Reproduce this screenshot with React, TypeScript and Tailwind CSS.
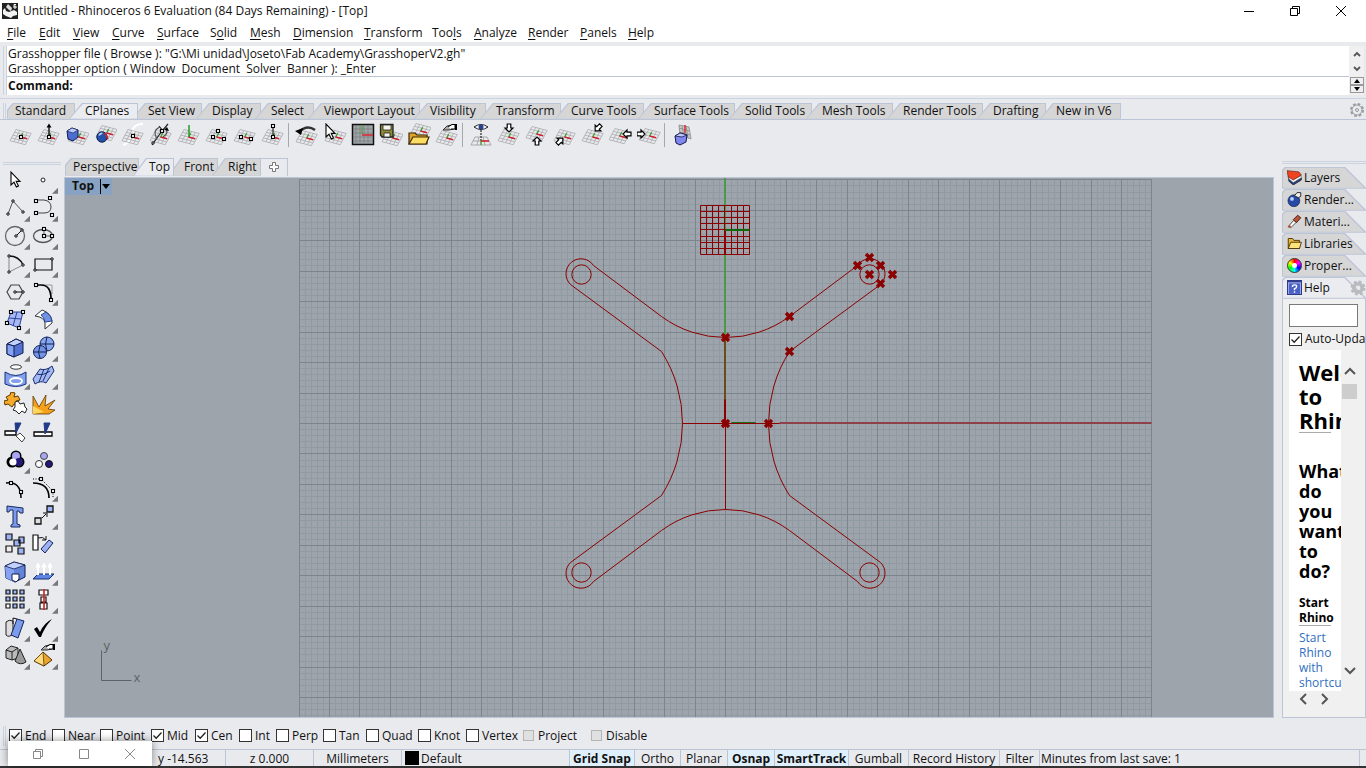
import React, { useState } from 'react';
import clsx from 'clsx';

type Slot = { label: string; width: string };

const MENUS: (Slot & { key: number })[] = [
    { label: 'File', width: 'w-8', key: 0 },
    { label: 'Edit', width: 'w-[34px]', key: 0 },
    { label: 'View', width: 'w-[39px]', key: 0 },
    { label: 'Curve', width: 'w-[45px]', key: 0 },
    { label: 'Surface', width: 'w-[53px]', key: 0 },
    { label: 'Solid', width: 'w-10', key: 1 },
    { label: 'Mesh', width: 'w-[43px]', key: 0 },
    { label: 'Dimension', width: 'w-[71px]', key: 0 },
    { label: 'Transform', width: 'w-[68px]', key: 0 },
    { label: 'Tools', width: 'w-[42px]', key: 3 },
    { label: 'Analyze', width: 'w-[54px]', key: 0 },
    { label: 'Render', width: 'w-[52px]', key: 0 },
    { label: 'Panels', width: 'w-12', key: 0 },
    { label: 'Help', width: 'w-10', key: 0 },
];

const TOOL_TABS: Slot[] = [
    { label: 'Standard', width: 'w-[68px]' },
    { label: 'CPlanes', width: 'w-[69px]' },
    { label: 'Set View', width: 'w-[70px]' },
    { label: 'Display', width: 'w-[65px]' },
    { label: 'Select', width: 'w-[59px]' },
    { label: 'Viewport Layout', width: 'w-[112px]' },
    { label: 'Visibility', width: 'w-[72px]' },
    { label: 'Transform', width: 'w-[81px]' },
    { label: 'Curve Tools', width: 'w-[89px]' },
    { label: 'Surface Tools', width: 'w-[97px]' },
    { label: 'Solid Tools', width: 'w-[83px]' },
    { label: 'Mesh Tools', width: 'w-[87px]' },
    { label: 'Render Tools', width: 'w-24' },
    { label: 'Drafting', width: 'w-[69px]' },
    { label: 'New in V6', width: 'w-[81px]' },
];

const VIEW_TABS: Slot[] = [
    { label: 'Perspective', width: 'w-[74px]' },
    { label: 'Top', width: 'w-[41px]' },
    { label: 'Front', width: 'w-[50px]' },
    { label: 'Right', width: 'w-[49px]' },
];

const OSNAPS: (Slot & { on?: boolean; disabled?: boolean })[] = [
    { label: 'End', width: 'w-[43px]', on: true },
    { label: 'Near', width: 'w-12' },
    { label: 'Point', width: 'w-[51px]' },
    { label: 'Mid', width: 'w-11', on: true },
    { label: 'Cen', width: 'w-11', on: true },
    { label: 'Int', width: 'w-[37px]' },
    { label: 'Perp', width: 'w-[47px]' },
    { label: 'Tan', width: 'w-[43px]' },
    { label: 'Quad', width: 'w-[52px]' },
    { label: 'Knot', width: 'w-12' },
    { label: 'Vertex', width: 'w-14' },
    { label: 'Project', width: 'w-[68px]', disabled: true },
    { label: 'Disable', width: 'w-16', disabled: true },
];

const MODES: (Slot & { on?: boolean })[] = [
    { label: 'Grid Snap', width: 'w-[65px]', on: true },
    { label: 'Ortho', width: 'w-[46px]' },
    { label: 'Planar', width: 'w-[47px]' },
    { label: 'Osnap', width: 'w-[47px]', on: true },
    { label: 'SmartTrack', width: 'w-[74px]', on: true },
    { label: 'Gumball', width: 'w-[60px]' },
    { label: 'Record History', width: 'w-[91px]' },
    { label: 'Filter', width: 'w-10' },
];

/* ---------- icon helpers, every icon lives on a 24x24 board ---------- */

const Icon: React.FC<{ children: React.ReactNode }> = ({ children }) => (
    <svg viewBox="0 0 24 24" className="h-6 w-6" fill="none" stroke="#111" strokeWidth="1" aria-hidden="true">{children}</svg>
);

const Knob: React.FC<{ x: number; y: number }> = ({ x, y }) => (
    <rect x={x - 1.5} y={y - 1.5} width="3" height="3" fill="#fff" stroke="#000" strokeWidth="1.1" />
);

const Dot: React.FC<{ x: number; y: number }> = ({ x, y }) => (
    <circle cx={x} cy={y} r="1.2" fill="#fff" stroke="#000" />
);

const Plane: React.FC<{ x?: number; y?: number }> = ({ x = 0, y = 0 }) => {
    const at = (u: number, v: number) => `${7 + 3.8 * u - 1.5 * v} ${6.5 + 1 * u + 2.8 * v}`;
    const lines = [0, 1, 2, 3, 4].map(i => `M${at(0, i)}L${at(4, i)}M${at(i, 0)}L${at(i, 4)}`).join('');
    return (
        <g transform={`translate(${x} ${y})`}>
            <path d={lines} stroke="#a9aaad" strokeWidth="0.8" />
            <path d={`M${at(2, 2)}L${at(2, 0.6)}`} stroke="#3fa535" strokeWidth="1.3" />
            <path d={`M${at(2, 2)}L${at(3.7, 2)}`} stroke="#cf1f2a" strokeWidth="1.6" />
        </g>
    );
};

const Arrow: React.FC<{ x: number; y: number; turn: number }> = ({ x, y, turn }) => (
    <path transform={`translate(${x} ${y}) rotate(${turn})`} d="M-4 -1.8H0V-4L4 0L0 4V1.8H-4Z" fill="#fff" stroke="#000" strokeWidth="1.2" />
);

const Hand = () => (
    <g strokeWidth="1">
        <path d="M8 7L12 3L19 1.5V6L14 7Z" fill="#aaa" stroke="#333" />
        <path d="M13 4L17 1.5H20V6H16" fill="#fff" stroke="#000" />
        <path d="M21 1V7" stroke="#000" strokeWidth="2" />
    </g>
);

const Pointer = () => (
    <path d="M3 1V14L6 11.2L8.4 16L10.5 15L8.2 10.4H12Z" fill="#fff" stroke="#000" strokeWidth="1.1" />
);

const PLANE_TOOLS: { name: string; art: React.ReactNode }[][] = [
    [
        { name: 'Set CPlane origin', art: <><Plane /><Knob x={12} y={14} /></> },
        { name: 'Set CPlane elevation', art: <><Plane /><path d="M12 13V3" stroke="#000" strokeWidth="1.3" /><path d="M9.5 4.5L12 0.5L14.5 4.5Z" fill="#000" stroke="none" /><Knob x={12} y={14} /></> },
        { name: 'Set CPlane to object', art: <><Plane x={2} /><path d="M2 8L7 5L13 7L13 14L8 18L3 16Z" fill="#4c6cd0" stroke="#111a55" /><path d="M2 8L7 5L13 7L8 10Z" fill="#b9cbf7" stroke="#111a55" strokeWidth="0.6" /></> },
        { name: 'Set CPlane to surface', art: <><Plane x={2} y={-4} /><circle cx="9" cy="14" r="5.2" fill="#2450a8" stroke="#10204f" /><path d="M6 12.5Q7 10 9.5 10.5" stroke="#b9cdfa" strokeWidth="1.6" /><path d="M12 10L15 16" stroke="#d22" strokeWidth="1.5" /></> },
        { name: 'Set CPlane perpendicular to curve', art: <><path d="M2 22C10 19 14 12 12 6C14 2 18 1 22 1" stroke="#fff" strokeWidth="2" /><Plane /><Knob x={12} y={13} /></> },
        { name: 'Rotate CPlane', art: <><Plane /><path d="M3 22L13 8L19 1M10 3L14 8" stroke="#222" strokeWidth="1.2" /><path d="M8 16Q3 7 11 4M17 5Q20 10 14 14" stroke="#555" strokeWidth="1.2" /><path d="M15 7L18 4L20 8Z" fill="#000" stroke="none" /><Dot x={4} y={20} /><Knob x={13} y={8} /></> },
        { name: 'Set CPlane vertical', art: <><Plane /><path d="M12 14V2" stroke="#1f9c24" strokeWidth="1.5" /></> },
        { name: 'Set CPlane by 3 points', art: <><Plane /><Knob x={13} y={8} /><Knob x={8} y={14} /><Knob x={19} y={16} /></> },
        { name: 'Set CPlane X axis', art: <><Plane /><Knob x={8} y={14} /><Knob x={18} y={16} /></> },
        { name: 'Set CPlane Z axis', art: <><Plane /><path d="M12 14V3" stroke="#000" /><Knob x={12} y={3} /><Knob x={12} y={14} /></> },
    ],
    [
        { name: 'Previous CPlane', art: <><Plane y={1} /><path d="M4 9Q12 1 20 7" stroke="#333" strokeWidth="2.5" /><path d="M0 8L8 5L6 12Z" fill="#000" stroke="none" /></> },
        { name: 'Select CPlane', art: <><Plane x={1} /><Pointer /></> },
        { name: 'Named CPlanes', art: <><rect x="1.5" y="1.5" width="21" height="20" fill="#a0a5a8" stroke="#111" strokeWidth="1.5" /><path d="M5 2V21M9 2V21M13 2V21M17 2V21M2 6H22M2 10H22M2 14H22M2 18H22" stroke="#777b7e" strokeWidth="0.7" /><path d="M11 2V11" stroke="#3fa535" /><path d="M11 12H22" stroke="#dc2430" strokeWidth="1.5" /></> },
        { name: 'Save CPlane', art: <><Plane x={2} y={1} /><path d="M1.5 1.5H14V14H3L1.5 12Z" fill="#8d8a35" stroke="#222" strokeWidth="1.3" /><path d="M4 2H12V7H4ZM5 10H11V14H5Z" fill="#f4f4ec" stroke="#222" strokeWidth="0.8" /></> },
        { name: 'Open CPlanes', art: <><Plane x={2} y={-6} /><path d="M2 21V10H8L10 12H20V21Z" fill="#dfa32a" stroke="#3c2a05" strokeWidth="1.2" /><path d="M2 21L6 14H22L19 21Z" fill="#fddc63" stroke="#3c2a05" strokeWidth="1.2" /></> },
        { name: 'CPlane properties', art: <><Plane y={1} /><Hand /></> },
    ],
    [
        { name: 'World top plan', art: <><path d="M6 14H18L22 22H2ZM10 14L8 22M14 14L16 22M4 18H20" stroke="#999" strokeWidth="0.8" /><path d="M12 7V18" stroke="#000" strokeDasharray="2 1" /><path d="M5 4Q12 -1 19 4Q12 9 5 4Z" fill="#fff" stroke="#222" /><circle cx="12" cy="4" r="2.5" fill="#28428f" stroke="none" /><path d="M12 22V17" stroke="#3fa535" strokeWidth="1.5" /><path d="M12 18H20" stroke="#cf1f2a" strokeWidth="1.5" /></> },
        { name: 'World top CPlane', art: <><Plane /><Arrow x={12} y={5} turn={90} /></> },
        { name: 'World bottom CPlane', art: <><Plane y={-3} /><Arrow x={12} y={18} turn={-90} /></> },
        { name: 'World left CPlane', art: <><Plane /><Arrow x={7} y={18} turn={-45} /></> },
        { name: 'World right CPlane', art: <><Plane /><Arrow x={17} y={5} turn={135} /></> },
        { name: 'World front CPlane', art: <><Plane x={-1} y={-1} /><Arrow x={18} y={11} turn={180} /></> },
        { name: 'World back CPlane', art: <><Plane x={1} y={-1} /><Arrow x={4} y={11} turn={0} /></> },
    ],
    [
        { name: 'CPlane to view', art: <><path d="M8 2L18 4L20 16L9 12ZM11 3L13 14M15 3L17 15M8 5L18 8M9 9L19 12" fill="#ccc" stroke="#888" strokeWidth="0.8" /><path d="M14 2V10" stroke="#d22" strokeWidth="1.4" /><path d="M4 13L9 10L16 12L15 19L9 22L5 20Z" fill="#7f88ee" stroke="#15174f" /><path d="M4 13L11 14L16 12L9 10Z" fill="#c3c8fa" stroke="#15174f" strokeWidth="0.8" /></> },
    ],
];

const BLUE = '#9db2f3';

const SIDE_TOOLS: { name: string; more?: boolean; art: React.ReactNode }[] = [
    { name: 'Select', art: <g transform="translate(4 3)"><Pointer /></g> },
    { name: 'Point', more: true, art: <circle cx="11" cy="12" r="2" fill="#fff" stroke="#222" /> },
    { name: 'Polyline', more: true, art: <><path d="M4 18L9 5L19 16" stroke="#555" /><Dot x={4} y={18} /><Dot x={9} y={5} /><Dot x={19} y={16} /></> },
    { name: 'Control point curve', more: true, art: <><path d="M4 4H12Q19 5 19 11Q19 17 12 17H4" stroke="#444" /><Knob x={4} y={5} /><Knob x={4} y={17} /><Knob x={18} y={2} /><Knob x={20} y={19} /></> },
    { name: 'Circle', more: true, art: <><circle cx="11" cy="12" r="9.5" stroke="#666" strokeWidth="1.3" /><path d="M12 12L18 6" /><Dot x={12} y={12} /><Dot x={18} y={6} /></> },
    { name: 'Ellipse', more: true, art: <><ellipse cx="11" cy="12" rx="9.5" ry="6.5" stroke="#555" strokeWidth="1.3" /><path d="M12 6V12H20" stroke="#555" /><Knob x={12} y={5} /><Knob x={12} y={12} /><Knob x={20} y={12} /></> },
    { name: 'Arc', more: true, art: <><path d="M5 20L19 13" stroke="#888" /><path d="M5 20V4" stroke="#888" /><path d="M5 4Q15 4 19 13" strokeWidth="1.5" /><Dot x={5} y={4} /><Dot x={5} y={20} /><Dot x={19} y={13} /></> },
    { name: 'Rectangle', more: true, art: <><path d="M3 7H20V18H3Z" strokeWidth="1.2" /><Dot x={20} y={7} /><Dot x={3} y={18} /></> },
    { name: 'Polygon', more: true, art: <><path d="M3 12L7 5H15L19 12L15 19H7Z" stroke="#444" strokeWidth="1.2" /><path d="M11 12H19" /><Dot x={11} y={12} /><Dot x={19} y={12} /></> },
    { name: 'Fillet curves', more: true, art: <><path d="M10 5H20V14" stroke="#999" /><path d="M4 5H9Q19 5 19 19" stroke="#000" strokeWidth="1.7" /><Knob x={4} y={5} /><Knob x={19} y={20} /></> },
    { name: 'Surface from corner points', more: true, art: <><path d="M7 4H19L15 20L3 15Z" fill="#a9b8f2" stroke="#29459e" /><path d="M13 4L9 18M5 10L17 11" stroke="#29459e" /><Knob x={7} y={4} /><Knob x={19} y={4} /><Knob x={3} y={15} /><Knob x={15} y={20} /></> },
    { name: 'Sweep surface', more: true, art: <><path d="M3 8L10 2Q19 5 20 13V15L13 21V15Q12 9 3 8Z" fill="#fff" stroke="#333" /><path d="M9 7L14 4Q20 8 20 13L13 14Q12 9 9 7Z" fill="#6f93e2" stroke="#26458e" /></> },
    { name: 'Box', more: true, art: <><path d="M3 8L12 3L19 6V17L10 21L3 18Z" fill="#5371cf" stroke="#101d56" /><path d="M3 8L10 10L19 6L12 3Z" fill="#c2d1fb" stroke="#101d56" /><path d="M3 8L10 10V21L3 18Z" fill="#86a3f2" stroke="#101d56" /></> },
    { name: 'Sphere union', more: true, art: <><circle cx="15" cy="8" r="7" fill="#86a6ee" stroke="#111f55" /><path d="M8 8H22M15 1Q12 8 15 15" stroke="#111f55" /><circle cx="8" cy="16" r="6.5" fill="#7495e6" stroke="#111f55" /><path d="M2 16H14M8 10Q5 16 8 22" stroke="#111f55" /></> },
    { name: 'Project curve', more: true, art: <><ellipse cx="12" cy="3" rx="5.5" ry="2.2" fill="#fff" stroke="#333" /><path d="M1 8Q12 15 22 8V20Q12 25 1 20Z" fill="#83a0ea" stroke="#14317b" /><ellipse cx="12" cy="17" rx="6" ry="3" stroke="#fff" strokeWidth="1.8" /></> },
    { name: 'Mesh plane', more: true, art: <><path d="M8 5Q14 7 20 2L22 7L14 19Q9 16 3 20L1 15Z" fill="#a5b9f1" stroke="#172e74" /><path d="M5 10Q11 12 18 7M12 5L7 18M17 4L11 17" stroke="#172e74" /></> },
    { name: 'Explode blocks', art: <><path d="M2 5L6 3L7 0L11 1L10 5L14 4L16 8L12 9L14 13L10 12L8 15L4 12L1 13L0 9L4 8Z" fill="#f5aa2a" stroke="#5e3b00" /><path d="M11 10L14 9L16 12L20 11L21 15L23 17L21 21L18 19L15 22L12 19L9 18L11 15Z" fill="#fff" stroke="#222" /></> },
    { name: 'Explode', art: <><path d="M1 22V4L7 15L14 3L13 14L23 8L16 17L23 18L17 22Z" fill="#f6a11c" stroke="#5e3b00" strokeWidth="0.8" /><path d="M1 22V14L12 20Z" fill="#ffd65a" stroke="none" /></> },
    { name: 'Trim', art: <><path d="M1 11H12V15H1Z" fill="#fff" stroke="#000" strokeWidth="1.3" /><path d="M11 3H17L12 13Z" fill="#213b88" stroke="#213b88" /><path d="M12 16L16 13L21 18L18 22Z" fill="#fff" stroke="#444" /></> },
    { name: 'Split', art: <><path d="M2 12H20V16H2Z" fill="#fff" stroke="#000" strokeWidth="1.3" /><path d="M12 3H18L13 14Z" fill="#213b88" stroke="#213b88" /></> },
    { name: 'Group', more: true, art: <><g stroke="#000" strokeWidth="3"><circle cx="12" cy="8" r="4" /><circle cx="8" cy="14" r="4" /><circle cx="15" cy="14" r="4" /></g><circle cx="12" cy="8" r="4" fill="#a8a6f0" stroke="none" /><circle cx="15" cy="14" r="4" fill="#211878" stroke="none" /><circle cx="9" cy="14" r="3.5" fill="#fff" stroke="none" /></> },
    { name: 'Ungroup', art: <><circle cx="12" cy="8" r="3.5" fill="#a8a6f0" stroke="#444" /><circle cx="7" cy="16" r="3.5" fill="#fff" stroke="#333" /><circle cx="17" cy="16" r="3.5" fill="#211878" stroke="#111" /></> },
    { name: 'Edit points on', art: <><path d="M2 7Q17 5 17 22" stroke="#000" strokeWidth="1.5" /><Knob x={7} y={7} /><Knob x={17} y={16} /></> },
    { name: 'Points off', more: true, art: <><path d="M1 3H9L21 15V22" stroke="#000" strokeDasharray="1 1.5" /><path d="M1 7Q17 7 17 22" stroke="#000" strokeWidth="1.7" /><Knob x={9} y={3} /><Knob x={21} y={15} /></> },
    { name: 'Text object', art: <path d="M3 2L19 4V9H16L15 7L13 7V20L16 21V23H7V21L9 20V6H6L5 8H3Z" fill="#7b9cec" stroke="#17285f" /> },
    { name: 'Move', more: true, art: <><path d="M15 2H21V8H15Z" fill={BLUE} strokeWidth="1.3" /><path d="M3 14H9V20H3Z" fill="#ddd" strokeWidth="1.3" /><path d="M10 14L14 10M11 9H15V13" /></> },
    { name: 'Copy', art: <g strokeWidth="1.2"><path d="M2 2H8V8H2ZM15 5H20V11H15ZM10 8H16V14H10ZM14 16H20V22H14Z" fill={BLUE} /><path d="M2 14H8V20H2Z" fill="#eee" /></g> },
    { name: 'Orient', art: <><path d="M1 3H6V18H1Z" fill="#fff" strokeWidth="1.2" /><path d="M9 17L17 8L21 11L13 21Z" fill={BLUE} stroke="#14245c" /><path d="M6 6Q11 4 14 8M14 4V8H10" /></> },
    { name: 'Boolean', more: true, art: <><path d="M1 6L10 2L21 5V17L11 22L2 18Z" fill="#6283d6" stroke="#101d56" /><path d="M1 6L10 9V22L2 18Z" fill="#86a3f2" stroke="none" /><path d="M1 6L10 9L21 5L10 2Z" fill="#c2d1fb" stroke="#101d56" strokeWidth="0.8" /><path d="M8 14H15V19L12 22L8 20Z" fill="#fff" stroke="#101d56" /></> },
    { name: 'Extrude surface', more: true, art: <><path d="M6 14H22L17 19H1Z" fill="#6086e5" stroke="#122d70" /><path d="M6 15V5M12 15V5M18 15V5" stroke="#fff" strokeWidth="2" /><path d="M4 7L6 3L8 7ZM10 7L12 3L14 7ZM16 7L18 3L20 7Z" fill="#fff" stroke="#fff" /></> },
    { name: 'Array', more: true, art: <g strokeWidth="1.2"><path d="M2 2H6V6H2ZM9 2H13V6H9ZM16 2H20V6H16ZM2 9H6V13H2ZM9 9H13V13H9ZM16 9H20V13H16ZM9 16H13V20H9ZM16 16H20V20H16Z" fill={BLUE} /><path d="M2 16H6V20H2Z" fill="#fff" /></g> },
    { name: 'Align', more: true, art: <><path d="M7 2H16V7H7ZM9 9H14V14H9ZM8 15H15V21H8Z" fill="#fff" strokeWidth="1.2" /><path d="M12 1V22" stroke="#d22" strokeWidth="1.7" /></> },
    { name: 'Bend', more: true, art: <><path d="M2 6Q5 3 9 5V18Q5 22 2 19Z" fill="#ddd" stroke="#222" /><path d="M13 3L20 5L14 22L7 19Z" fill="#7b9cec" stroke="#14245c" /><path d="M13 3L9 2L9 8" /></> },
    { name: 'Check', more: true, art: <path d="M2 13L5 11L8 16Q12 7 20 3Q12 12 9 21H7Z" fill="#000" stroke="none" /> },
    { name: 'Solid creation', more: true, art: <><path d="M2 6L7 2L14 4V14L8 16L2 14Z" fill="#bbb" stroke="#222" /><path d="M2 6L8 8L14 4M8 8V16" stroke="#222" /><path d="M16 5L22 18Q16 22 11 17Z" fill="#999" stroke="#222" /></> },
    { name: 'Render tools', more: true, art: <><path d="M2 17L11 8L20 16L12 22Z" fill="#e9a52e" stroke="#4d2f00" /><path d="M11 8L12 22L2 17Z" fill="#ffdb7d" stroke="#4d2f00" strokeWidth="0.7" /><g transform="translate(1 -1)"><Hand /></g></> },
];

const PANELS: { label: string; art: React.ReactNode }[] = [
    { label: 'Layers', art: <><path d="M2 10L10 18L23 12V16L10 24L3 18Z" fill="#263f7c" stroke="#111" /><path d="M2 7L10 15L23 9V12L10 20L3 14Z" fill="#fff" stroke="#777" /><path d="M0 1L19 3L23 8L10 16L2 11Z" fill="#ee4421" stroke="#5d160a" /></> },
    { label: 'Render...', art: <><circle cx="11" cy="14" r="9.5" fill="#274ba5" stroke="#101d4a" /><circle cx="8" cy="11" r="3" fill="#bfd2ff" stroke="none" /><path d="M12 6L16 1H22V7L18 9Z" fill="#eee" stroke="#222" strokeWidth="1.5" /></> },
    { label: 'Materi...', art: <><path d="M2 20L11 10L15 13L6 22Z" fill="#fff" stroke="#444" strokeWidth="1.5" /><path d="M10 9L17 2L22 6L15 14Z" fill="#b5583a" stroke="#4c1c0f" strokeWidth="1.5" /><path d="M1 22L4 17L7 20Z" fill="#c42" stroke="none" /></> },
    { label: 'Libraries', art: <><path d="M2 20V4H9L11 7H20V20Z" fill="#e9b93e" stroke="#4c3606" strokeWidth="1.5" /><path d="M2 20L6 10H23L20 20Z" fill="#ffe279" stroke="#4c3606" strokeWidth="1.5" /></> },
];

const CheckBox: React.FC<{ label: string; on?: boolean; disabled?: boolean; className?: string }> = ({ label, on = false, disabled, className }) => (
    <label className={clsx('flex shrink-0 items-center gap-[3px] whitespace-nowrap', className)}>
        <span className="grid">
            <input
                type="checkbox"
                defaultChecked={on}
                disabled={disabled}
                className="peer col-start-1 row-start-1 h-[13px] w-[13px] appearance-none border border-[#333] bg-white disabled:m-px disabled:h-[11px] disabled:w-[11px] disabled:border-[#b5b5b5] disabled:bg-[#dfe0e0]"
            />
            <svg viewBox="0 0 13 13" className="pointer-events-none invisible col-start-1 row-start-1 h-[13px] w-[13px] peer-checked:visible" fill="none" stroke="#222" strokeWidth="1.3">
                <path d="M2.5 6.5L5.2 9.2L10.5 3.5" />
            </svg>
        </span>
        {label}
    </label>
);

const TabStrip: React.FC<{ tabs: Slot[]; initial: string; tall?: boolean }> = ({ tabs, initial, tall }) => {
    const [active, setActive] = useState(initial);
    return (
        <div role="tablist" className="flex shrink-0 items-end">
            {tabs.map((tab, i) => (
                <button
                    key={tab.label}
                    role="tab"
                    aria-selected={active === tab.label}
                    onClick={() => setActive(tab.label)}
                    className={clsx(
                        'relative shrink-0 bg-[#bcc5d6] pt-px pr-px pl-px whitespace-nowrap',
                        tab.width,
                        tall ? 'h-[18px]' : 'h-4',
                        i > 0 && '-ml-[6px]',
                        i === 0 ? '[clip-path:polygon(0_100%,0_7px,6px_0,100%_0,100%_100%)]' : '[clip-path:polygon(0_100%,13px_0,100%_0,100%_100%)]',
                        active === tab.label && 'z-10'
                    )}
                >
                    <span
                        className={clsx(
                            'flex h-full items-center',
                            i === 0 ? 'pl-[7px] [clip-path:polygon(0_100%,0_7px,6px_0,100%_0,100%_100%)]' : 'pl-[15px] [clip-path:polygon(0_100%,13px_0,100%_0,100%_100%)]',
                            active === tab.label ? 'bg-[#ebecf0]' : 'bg-[#d6d6d7]'
                        )}
                    >
                        {tab.label}
                    </span>
                </button>
            ))}
        </div>
    );
};

const TitleBar = () => (
    <header className="flex h-[22px] items-center bg-white pr-[2px] pl-[2px]">
        <svg viewBox="0 0 16 16" className="h-4 w-4" aria-hidden="true">
            <rect width="16" height="16" fill="#222" />
            <path d="M1 7L3 5L4 8L7 9L12 7L15 9V12L11 13L9 15L4 13L1 11Z" fill="#f4f4f4" />
            <path d="M6 1L10 5L9 8L7 7L4 4Z" fill="#ddd" />
            <path d="M14 1.5H12V5H14V3.2H12" fill="none" stroke="#fff" />
        </svg>
        <h1 className="ml-[5px]">Untitled - Rhinoceros 6 Evaluation (84 Days Remaining) - [Top]</h1>
        <div className="ml-auto flex">
            <button aria-label="Minimize" className="grid h-5 w-[46px] place-items-center"><svg viewBox="0 0 12 12" className="h-3 w-3"><path d="M1 6.5H11" stroke="#000" /></svg></button>
            <button aria-label="Restore" className="grid h-5 w-[46px] place-items-center"><svg viewBox="0 0 12 12" className="h-3 w-3" fill="none" stroke="#000"><path d="M1.5 3.5H8.5V10.5H1.5ZM3.5 3.5V1.5H10.5V8.5H8.5" /></svg></button>
            <button aria-label="Close" className="grid h-5 w-[46px] place-items-center"><svg viewBox="0 0 12 12" className="h-3 w-3"><path d="M1 1L11 11M11 1L1 11" stroke="#000" /></svg></button>
        </div>
    </header>
);

const MenuBar = () => (
    <nav className="flex h-5 items-end bg-white pl-[7px]">
        {MENUS.map(m => (
            <button key={m.label} className={clsx('shrink-0 text-left leading-[18px]', m.width)}>
                {m.label.slice(0, m.key)}<u className="underline-offset-2">{m.label[m.key]}</u>{m.label.slice(m.key + 1)}
            </button>
        ))}
    </nav>
);

const CommandArea = () => (
    <section className="flex border-b border-[#ccd3e0] pt-1 pr-[2px] pb-[3px] pl-[3px]">
        <div className="w-1 border-x border-[#ccd3e0]"></div>
        <div className="min-w-0 grow bg-white">
            <div className="h-[31px] border-b border-[#bcc5d6] pl-px leading-[15px]">
                <p>Grasshopper file ( Browse ): "G:\Mi unidad\Joseto\Fab Academy\GrasshoperV2.gh"</p>
                <p className="whitespace-pre">Grasshopper option ( Window  Document  Solver  Banner ): _Enter</p>
            </div>
            <label className="flex h-[18px] items-center pl-px">
                <b className="font-bold">Command:</b>
                <input className="min-w-0 grow pl-1 outline-none" />
            </label>
        </div>
        <div className="flex w-[15px] flex-col items-center bg-[#f0f0f0]">
            <button aria-label="Scroll up" className="grid h-4 place-items-center"><svg viewBox="0 0 8 6" className="h-[6px] w-2" fill="none" stroke="#555" strokeWidth="1.8"><path d="M1 5L4 2L7 5" /></svg></button>
            <button aria-label="Scroll down" className="grid h-[15px] place-items-center"><svg viewBox="0 0 8 6" className="h-[6px] w-2" fill="none" stroke="#555" strokeWidth="1.8"><path d="M1 1L4 4L7 1" /></svg></button>
            <button aria-label="Previous command" className="grid h-2 w-[14px] place-items-center border border-[#999]"><svg viewBox="0 0 6 4" className="h-1 w-[6px]"><path d="M0 4L3 0L6 4Z" /></svg></button>
            <button aria-label="Next command" className="grid h-2 w-[14px] place-items-center border border-[#999]"><svg viewBox="0 0 6 4" className="h-1 w-[6px]"><path d="M0 0L3 4L6 0Z" /></svg></button>
        </div>
    </section>
);

const Gear: React.FC<{ filled?: boolean }> = ({ filled }) => (
    <svg viewBox="0 0 16 16" className="h-4 w-4" fill="none" aria-hidden="true">
        <circle cx="8" cy="8" r="6" stroke={filled ? '#b9bbbf' : '#999ca2'} strokeWidth={filled ? 3 : 2} strokeDasharray="2.7 2" />
        <circle cx="8" cy="8" r={filled ? 4.2 : 5} stroke={filled ? '#b9bbbf' : '#999ca2'} strokeWidth={filled ? 3.5 : 1} />
        <circle cx="8" cy="8" r="1.5" stroke={filled ? 'none' : '#999ca2'} />
    </svg>
);

const Toolbars = () => (
    <section className="flex flex-col">
        <div className="flex h-[21px] items-end border-b border-[#bcc5d6] pt-1 pl-[3px]">
            <div className="mr-px h-full w-[3px] shrink-0 border-x border-[#ccd3e0]"></div>
            <TabStrip tabs={TOOL_TABS} initial="CPlanes" />
            <button aria-label="Toolbar options" className="mr-[1px] mb-px ml-auto"><Gear /></button>
        </div>
        <div className="flex h-[33px] items-center pb-[3px] pl-[7px]">
            {PLANE_TOOLS.map((group, g) => (
                <div key={g} className="flex items-center">
                    {g > 0 && <div className="ml-px h-6 w-[5px] border-l border-[#a5a8ae]"></div>}
                    {group.map(tool => (
                        <button key={tool.name} title={tool.name} className="grid h-7 w-7 place-items-center"><Icon>{tool.art}</Icon></button>
                    ))}
                </div>
            ))}
        </div>
    </section>
);

const SideTools = () => (
    <aside className="w-16 shrink-0">
        <div className="mx-[3px] mt-[9px] h-[3px] border-y border-[#ccd3e0]"></div>
        <div className="mt-px grid grid-cols-[28px_28px] pl-[2px]">
            {SIDE_TOOLS.map(tool => (
                <button key={tool.name} title={tool.name} className="relative grid h-7 w-7 place-items-center">
                    <Icon>{tool.art}</Icon>
                    {tool.more && <span className="absolute right-0 bottom-0 h-[6px] w-[6px] bg-[#777] [clip-path:polygon(100%_0,100%_100%,0_100%)]"></span>}
                </button>
            ))}
        </div>
    </aside>
);

/* ---------- viewport, coordinates are relative to the world origin ---------- */

const STEP = 30.46;
const MARKS = [[0, -86], [64, -107], [64, -72], [0, 0], [43, 0], [144, -166], [132, -158], [155, -158], [144, -149], [167, -149], [155, -140]];
const HOLES = [[-144, -149], [144, -149], [-144, 149], [144, 149]];

const gridPath = (major: boolean) => {
    const out: string[] = [];
    for (let i = -70; i <= 70; i++) {
        if ((i % 5 === 0) !== major) continue;
        const p = Math.round((i * STEP) / 5);
        out.push(`M${p} -244V426`);
        if (p >= -244) out.push(`M-426 ${p}H426`);
    }
    return out.join('');
};

const Drawing = () => (
    <svg viewBox="-660.5 -245.5 1208 544" preserveAspectRatio="xMidYMin slice" className="col-start-1 row-start-1 h-full min-h-0 w-full min-w-0" fill="none" role="img" aria-label="Top viewport">
        <path d={gridPath(false)} stroke="#909aa3" strokeWidth="1" />
        <path d={gridPath(true)} stroke="#7c858e" strokeWidth="1" />
        <path d="M-0.5 -247V-86" stroke="#4b9a4c" strokeWidth="2" />
        <path d="M-0.5 -86V0" stroke="#6b4a1b" strokeWidth="2" />
        <path d="M54 -0.5H426" stroke="#8f4149" strokeWidth="2" />
        <g stroke="#8b0000">
            <path d="M-43 0H54M0 0V86" />
            <path d="M-0.5 -24V0" strokeWidth="2" />
            <path d="M-155 -139L-64 -72A134 134 0 0 1 -64 72L-155 139A15 15 0 1 0 -132 158L-64 107A108 108 0 0 1 64 107L132 158A15 15 0 1 0 155 139L64 72A134 134 0 0 1 64 -72L155 -139A15 15 0 1 0 132 -158L64 -107A108 108 0 0 1 -64 -107L-132 -158A15 15 0 1 0 -155 -139Z" />
            {HOLES.map(([x, y]) => <circle key={`${x},${y}`} cx={x} cy={y} r="9.7" />)}
            <path d={[0, 1, 2, 3, 4, 5, 6, 7, 8].map(i => Math.round(i * 6.1)).map(p => `M${p - 25} -218V-169M-25 ${p - 218}H24`).join('')} />
            <path d="M-0.5 -193V-169" strokeWidth="2" />
            <path d={MARKS.map(([x, y]) => `M${x - 3.5} ${y - 3.5}L${x + 3.5} ${y + 3.5}M${x + 3.5} ${y - 3.5}L${x - 3.5} ${y + 3.5}`).join('')} strokeWidth="3.4" />
        </g>
        <path d="M0 -193.5H24" stroke="#0a6b0a" strokeWidth="2" />
        <path d="M6 -1H30" stroke="#1d6b16" />
        <path d="M-624 227V257H-594" stroke="#5d6267" />
        <g fill="#5d6267" fontSize="13" fontFamily="Open Sans, sans-serif">
            <text x="-622" y="226">y</text>
            <text x="-592" y="258">x</text>
        </g>
    </svg>
);

const Viewport = () => (
    <main className="flex min-w-0 grow flex-col">
        <div className="flex h-6 items-start pt-[5px] pl-px">
            <TabStrip tabs={VIEW_TABS} initial="Top" tall />
            <button aria-label="New viewport" className="grid h-[18px] w-[27px] place-items-center border-t border-r border-[#bcc5d6]">
                <svg viewBox="0 0 10 10" className="h-[10px] w-[10px]" fill="#fff" stroke="#777"><path d="M3.5 0.5H6.5V3.5H9.5V6.5H6.5V9.5H3.5V6.5H0.5V3.5H3.5Z" /></svg>
            </button>
        </div>
        <div className="grid min-h-0 grow grid-cols-1 grid-rows-1 border border-[#bcc5d6] bg-[#9da4ab]">
            <Drawing />
            <div className="z-10 col-start-1 row-start-1 flex h-[17px] w-[47px] items-center self-start bg-[#87a2c2] pl-[7px] font-bold">
                Top
                <button aria-label="Viewport menu" className="ml-auto flex h-[15px] w-3 items-center border-l border-black pl-px">
                    <svg viewBox="0 0 8 5" className="h-[5px] w-2"><path d="M0 0H8L4 5Z" /></svg>
                </button>
            </div>
        </div>
    </main>
);

const HelpPanel = () => (
    <div className="flex min-h-0 grow flex-col overflow-hidden border-x border-b border-[#bcc5d6] bg-[#f0f0f0] pt-[5px] pl-[6px]">
        <input aria-label="Search help" className="h-[23px] w-[69px] shrink-0 border border-[#7a7a7a] bg-white px-1" />
        <CheckBox label="Auto-Update" on className="mt-1 h-[17px]" />
        <div className="mt-[2px] flex h-[341px] shrink-0">
            <div className="w-[52px] shrink-0 overflow-hidden bg-white pl-[10px] text-black">
                <h2 className="mt-[10px] w-8 border-b border-[#aaa] text-[22px] leading-6 font-bold">Welcome to Rhino</h2>
                <h3 className="mt-7 w-8 text-[18px] leading-5 font-bold">What do you want to do?</h3>
                <h4 className="mt-[14px] w-8 border-b border-[#aaa] leading-[15px] font-bold">Start Rhino</h4>
                <a href="#shortcut" className="mt-[4px] block w-8 leading-[15px] text-[#3070c0]">Start Rhino with shortcut</a>
            </div>
            <div className="flex w-[17px] flex-col items-center pt-[17px] pb-4">
                <button aria-label="Scroll help up"><svg viewBox="0 0 12 8" className="h-2 w-3" fill="none" stroke="#555" strokeWidth="2"><path d="M1 7L6 2L11 7" /></svg></button>
                <div className="mt-[9px] h-[15px] w-[15px] bg-[#cdcdcd]"></div>
                <button aria-label="Scroll help down" className="mt-auto"><svg viewBox="0 0 12 8" className="h-2 w-3" fill="none" stroke="#555" strokeWidth="2"><path d="M1 1L6 6L11 1" /></svg></button>
            </div>
        </div>
        <div className="flex h-[17px] shrink-0 items-center gap-[14px] pl-[10px]">
            <button aria-label="Scroll help left"><svg viewBox="0 0 8 12" className="h-3 w-2" fill="none" stroke="#555" strokeWidth="2"><path d="M7 1L2 6L7 11" /></svg></button>
            <button aria-label="Scroll help right"><svg viewBox="0 0 8 12" className="h-3 w-2" fill="none" stroke="#555" strokeWidth="2"><path d="M1 1L6 6L1 11" /></svg></button>
        </div>
    </div>
);

const PanelTab: React.FC<{ label: string; active?: boolean; children: React.ReactNode }> = ({ label, active, children }) => (
    <button className="flex h-[22px] w-[84px] shrink-0 bg-[#bcc5d6] py-px pl-px [clip-path:polygon(0_3px,3px_0,63px_0,84px_21px,84px_100%,0_100%)]">
        <span className={clsx('flex h-full w-[82px] items-center gap-[2px] pl-1 [clip-path:polygon(0_3px,3px_0,61px_0,81px_20px,0_20px)]', active ? 'bg-[#ebecf0]' : 'bg-[#d6d6d7]')}>
            {children}
            {label}
        </span>
    </button>
);

const RightPanels = () => (
    <aside className="ml-2 flex w-[84px] shrink-0 flex-col overflow-hidden">
        <div className="mt-2 mb-[3px] h-[3px] shrink-0 border-y border-[#ccd3e0]"></div>
        {PANELS.map(p => (
            <PanelTab key={p.label} label={p.label}>
                <svg viewBox="0 0 24 24" className="h-[15px] w-[15px]" aria-hidden="true">{p.art}</svg>
            </PanelTab>
        ))}
        <PanelTab label="Proper...">
            <span className="grid h-[15px] w-[15px] place-items-center rounded-full border border-[#333] bg-[conic-gradient(red,magenta,blue,cyan,lime,yellow,red)]"><span className="h-[5px] w-[5px] rounded-full bg-white"></span></span>
        </PanelTab>
        <div className="flex shrink-0">
            <PanelTab label="Help" active>
                <svg viewBox="0 0 14 14" className="h-[15px] w-[15px]" fill="none" aria-hidden="true">
                    <rect x="0.5" y="0.5" width="13" height="13" fill="#dfe5ff" stroke="#2c3b8c" />
                    <path d="M1 1.5H13" stroke="#2c3b8c" strokeWidth="1.5" />
                    <rect x="1.5" y="3" width="11" height="10" fill="#4a62c8" />
                    <path d="M5 6.5Q5 4.5 7 4.5Q9 4.5 9 6Q9 7.5 7 8V9.5M7 10.5V11.8" stroke="#fff" strokeWidth="1.3" />
                </svg>
            </PanelTab>
            <button aria-label="Panel options" className="z-10 -ml-4"><Gear filled /></button>
        </div>
        <HelpPanel />
    </aside>
);

const StatusBar = () => (
    <footer className="flex h-[19px] shrink-0 items-stretch border-t border-b-2 border-t-[#bcc5d6] border-b-[#333] leading-[17px]">
        <div className="w-[226px] shrink-0 border-r border-[#bcc5d6] pl-[158px]">y -14.563</div>
        <div className="w-[88px] shrink-0 border-r border-[#bcc5d6] text-center">z 0.000</div>
        <div className="w-[88px] shrink-0 border-r border-[#bcc5d6] text-center">Millimeters</div>
        <button className="flex w-[168px] shrink-0 items-center gap-[2px] border-r border-[#bcc5d6] pl-[3px]">
            <span className="h-[14px] w-[14px] bg-black"></span>
            Default
        </button>
        {MODES.map(m => (
            <button key={m.label} className={clsx('shrink-0 border-r border-[#bcc5d6] whitespace-nowrap', m.width, m.on && 'bg-[#dfeffb] font-bold')}>{m.label}</button>
        ))}
        <div className="mr-[6px] grow border-r border-[#bcc5d6] pl-px">Minutes from last save: 1</div>
    </footer>
);

const MiniWindow = () => (
    <div className="absolute bottom-[2px] left-2 z-20 flex h-[25px] w-[144px] items-center gap-4 bg-white pl-[15px] text-[#888] shadow-[0_0_8px_rgba(0,0,0,0.45)]">
        <button aria-label="Restore child" className="grid h-full w-[30px] place-items-center"><svg viewBox="0 0 12 12" className="h-3 w-3" fill="none" stroke="currentColor"><path d="M1.5 3.5H8.5V10.5H1.5ZM3.5 3.5V1.5H10.5V8.5H8.5" /></svg></button>
        <button aria-label="Maximize child" className="grid h-full w-[30px] place-items-center"><svg viewBox="0 0 12 12" className="h-3 w-3" fill="none" stroke="currentColor"><path d="M1.5 1.5H10.5V10.5H1.5Z" /></svg></button>
        <button aria-label="Close child" className="grid h-full w-[30px] place-items-center"><svg viewBox="0 0 12 12" className="h-3 w-3" stroke="currentColor"><path d="M1 1L11 11M11 1L1 11" /></svg></button>
    </div>
);

const App: React.FC = () => (
    <div className="relative flex h-screen flex-col overflow-hidden bg-[#e9eaee] font-['Open_Sans',sans-serif] text-[12px] leading-4 text-[#111]">
        <TitleBar />
        <MenuBar />
        <CommandArea />
        <Toolbars />
        <div className="flex min-h-0 grow">
            <SideTools />
            <Viewport />
            <RightPanels />
        </div>
        <div className="flex h-[31px] shrink-0 items-center pt-1 pl-[3px]">
            <div className="mr-[3px] h-5 w-[3px] border-x border-[#ccd3e0]"></div>
            {OSNAPS.map(o => <CheckBox key={o.label} label={o.label} on={o.on} disabled={o.disabled} className={o.width} />)}
        </div>
        <StatusBar />
        <MiniWindow />
    </div>
);

export default App;
